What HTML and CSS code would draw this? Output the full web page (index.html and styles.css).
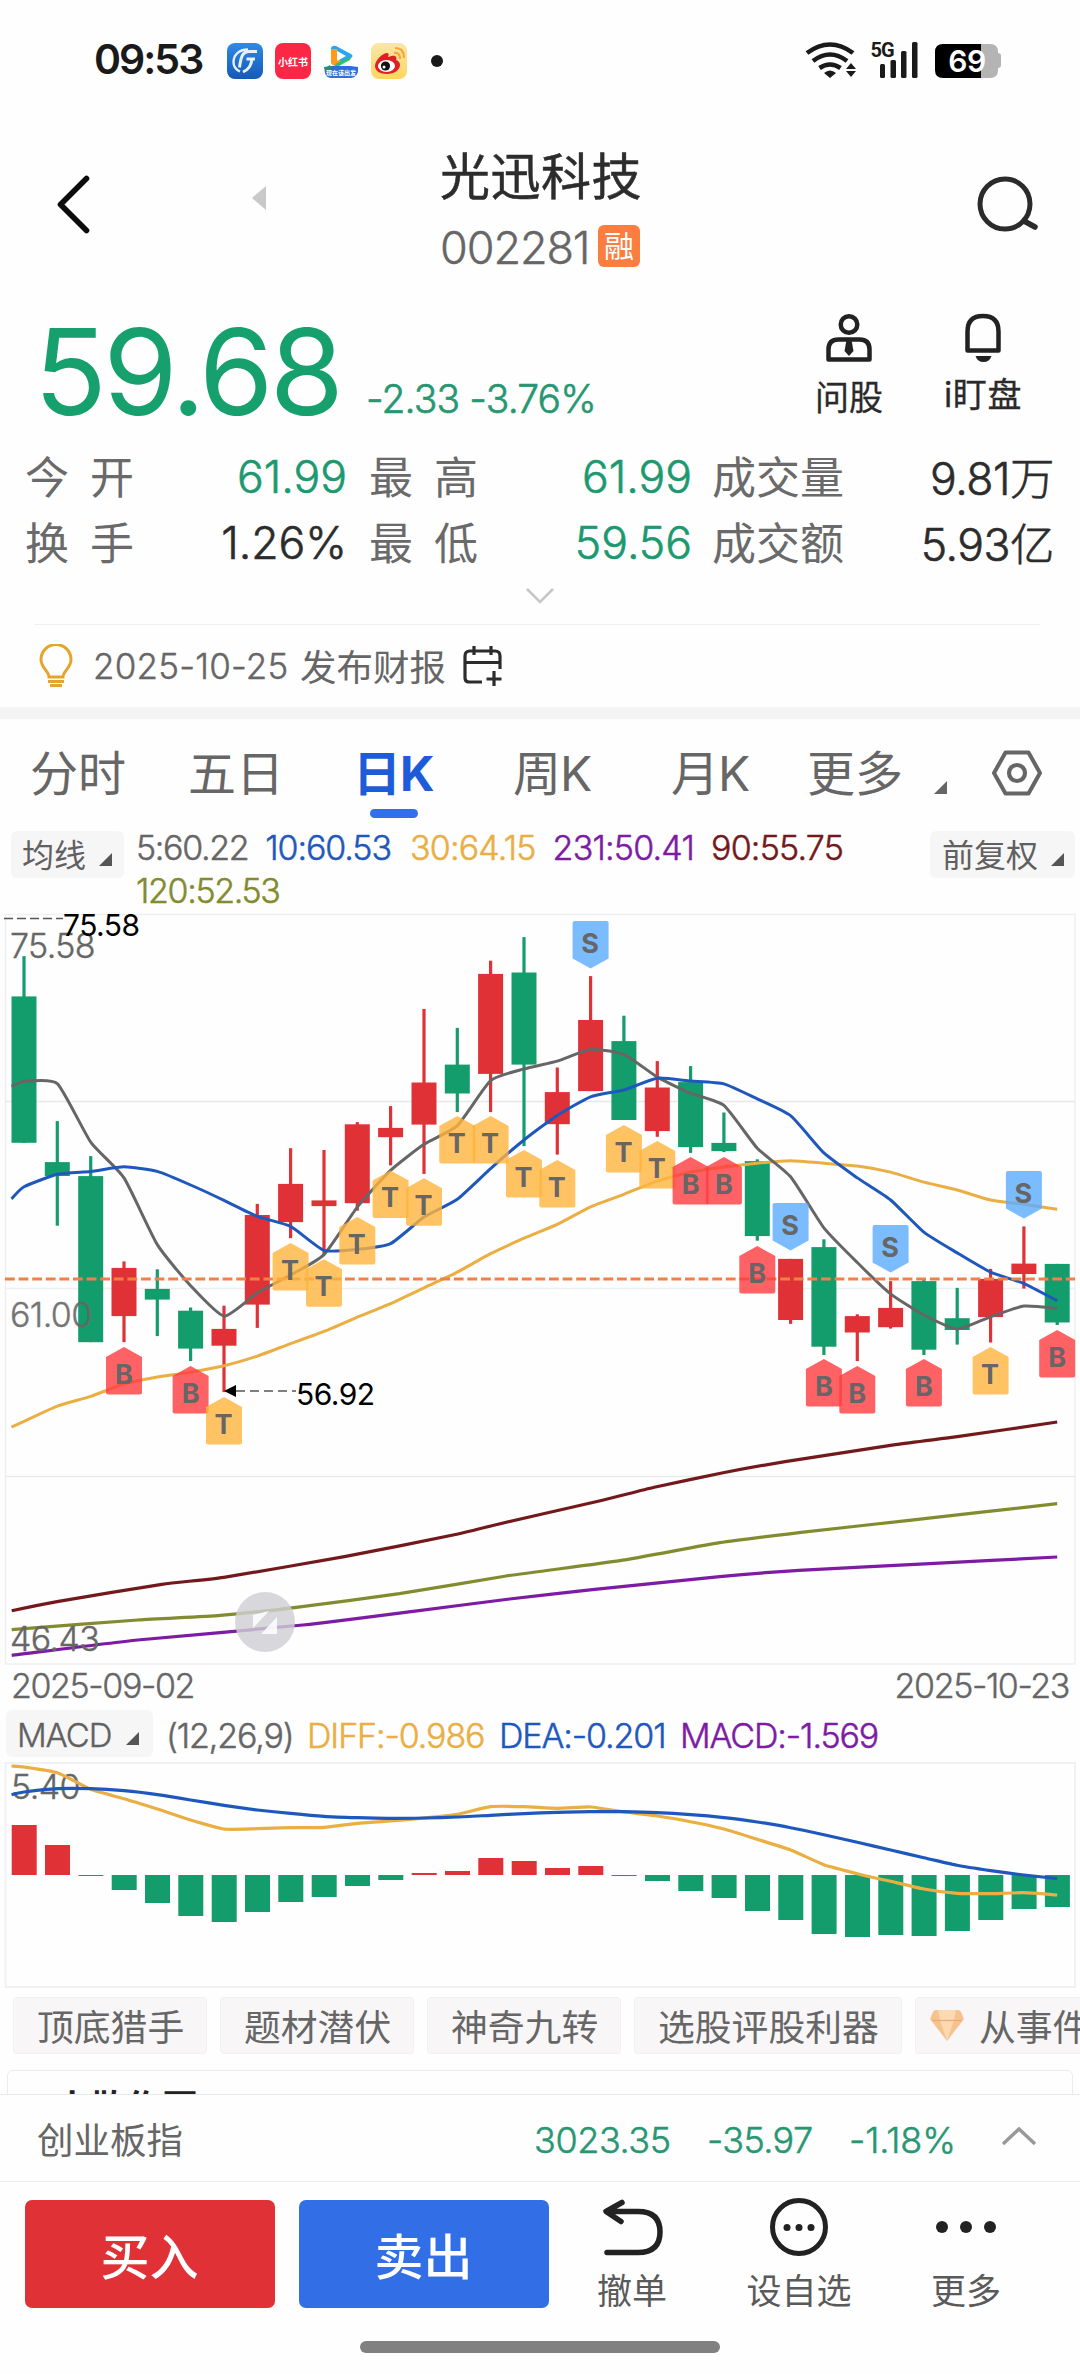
FILE: index.html
```html
<!DOCTYPE html>
<html lang="zh-CN">
<head>
<meta charset="utf-8">
<title>光迅科技 002281</title>
<link rel="stylesheet" href="styles.css">
</head>
<body>
<div class="status">
  <span class="clock">09:53</span>
  <div class="apps">
    <svg width="36" height="36" viewBox="0 0 36 36"><defs><linearGradient id="gb" x1="0" y1="0" x2="0" y2="1"><stop offset="0" stop-color="#2f8ae6"/><stop offset="1" stop-color="#1559b8"/></linearGradient></defs><rect width="36" height="36" rx="8" fill="url(#gb)"/><path d="M21 6.500C11 6.500 6.500 13 6.500 19c0 5 3 8 6.500 9.500" fill="none" stroke="#e6f0fc" stroke-width="2.400"/><path d="M30 8.500h-8c-6 0-8 4-9.500 16M28 16h-8.500M25 16c-1 7-3 10-9 13" fill="none" stroke="#e6f0fc" stroke-width="3"/></svg>
    <svg width="36" height="36" viewBox="0 0 36 36"><rect width="36" height="36" rx="8" fill="#fb2744"/><text x="18" y="22.500" class="app-xhs">小红书</text></svg>
    <svg width="36" height="36" viewBox="0 0 36 36"><path d="M8 5q1-3 5-2l15 8q3 2 0 4L14 23q-4 0-5-3z" fill="#2aa5f0"/><path d="M8 6v14q2 4 6 2l4-2-4-14z" fill="#ff9a1f"/><path d="M12 21l16-7q0 3-3 4l-9 5q-3 1-4-2z" fill="#2bc36b"/><path d="M14 8v10l9-5z" fill="#fff"/><path d="M1 24l8-1h18l8 1v5q-2 6-8 6H9q-6 0-7-5z" fill="#2c6fd6"/><path d="M2 25l5-3 1 3-5 4z" fill="#1f9c4a"/><text x="18" y="32" class="app-tv">现在该出发</text></svg>
    <svg width="36" height="36" viewBox="0 0 36 36"><defs><linearGradient id="wb" x1="0" y1="0" x2="0" y2="1"><stop offset="0" stop-color="#fbe6a6"/><stop offset="1" stop-color="#fdd65e"/></linearGradient></defs><rect width="36" height="36" rx="8" fill="url(#wb)"/><path d="M4 23c0-6 8-13 12-13 3 0 1 4 1 4s7-3 8 0c1 1 0 3 0 3s4 1 4 5c0 5-6 9-13 9S4 28 4 23z" fill="#df1f26"/><ellipse cx="15.500" cy="23" rx="8.500" ry="6" fill="#fff"/><circle cx="14.500" cy="23" r="4.600" fill="#111"/><circle cx="13" cy="24" r="1.500" fill="#fff"/><path d="M23 10q6-1 6 6M24 5q9 0 9 10" fill="none" stroke="#f0a93c" stroke-width="2.200"/></svg>
  </div>
  <span class="dot"></span>
  <svg class="radio" width="200" height="44" viewBox="804 38 200 44">
    <g fill="none" stroke="#1a1a1a" stroke-width="4.600"><path d="M807 53q23-17 46 0M813 61q17-13 34 0M819.500 68q10.500-7 21 0"/></g>
    <path d="M824 73q6-5 12 0l-6 5z" fill="#1a1a1a"/><path d="M846 69l5-6 5 6zM846 71h10l-5 6z" fill="#1a1a1a"/>
    <text x="870.500" y="56.500" class="net">5G</text>
    <g fill="#1a1a1a"><rect x="880" y="64" width="5" height="14" rx="1.500"/><rect x="890.500" y="60" width="5.500" height="18" rx="1.500"/><rect x="901" y="51" width="5.500" height="27" rx="1.500"/><rect x="912" y="42" width="5.500" height="36" rx="1.500"/></g>
    <path d="M981 44h9q8 0 8 8v1q3 0 3 3v9q0 3-3 3v2q0 8-8 8h-9z" fill="#b4b4b4"/><path d="M981 44h-38q-8 0-8 8v18q0 8 8 8h38z" fill="#000"/>
    <text x="967" y="72" class="batt">69</text>
  </svg>
</div>

<header class="head">
  <svg class="back" width="40" height="66" viewBox="52 172 40 66"><path d="M86.500 178.500L60.500 204.500 86.500 230.500" fill="none" stroke="#0c0c0c" stroke-width="5.600" stroke-linecap="round" stroke-linejoin="round"/></svg>
  <svg class="prev" width="14" height="24" viewBox="0 0 14 24"><path d="M14 0v24L0 12z" fill="#c9c9c9"/></svg>
  <div class="name">
    <h1>光迅科技</h1>
    <div class="code"><span>002281</span><i>融</i></div>
  </div>
  <svg class="find" width="66" height="60" viewBox="976 174 66 60"><circle cx="1005" cy="204" r="25" fill="none" stroke="#2b2b2b" stroke-width="5"/><path d="M1024 221l11 6" stroke="#2b2b2b" stroke-width="5.500" stroke-linecap="round"/></svg>
</header>

<section class="quote">
  <span class="price">59.68</span><span class="chg">-2.33 -3.76%</span>
  <div class="act ask"><svg width="48" height="52" viewBox="825 312 48 52"><g fill="none" stroke="#222" stroke-width="4.500"><circle cx="849" cy="324.500" r="8.300"/><path d="M828.500 359.500v-10q0-10 10-10h21q10 0 10 10v10z" stroke-linejoin="round"/></g><path d="M846.500 340h5l2 11-4.500 5-4.500-5z" fill="#222"/></svg><b>问股</b></div>
  <div class="act eye"><svg width="48" height="52" viewBox="959 312 48 52"><path d="M967.500 350.500v-19q0-15.500 15.500-15.500t15.500 15.500v19z" fill="none" stroke="#222" stroke-width="4.500" stroke-linejoin="round"/><path d="M975.500 356h16q-2 6-8 6t-8-6z" fill="#222"/></svg><b>i盯盘</b></div>
</section>

<section class="stats">
  <label class="sp">今开</label><span class="dn">61.99</span><label class="sp">最高</label><span class="dn">61.99</span><label>成交量</label><span>9.81万</span>
  <label class="sp">换手</label><span>1.26%</span><label class="sp">最低</label><span class="dn">59.56</span><label>成交额</label><span>5.93亿</span>
</section>
<div class="fold"><svg width="28" height="16" viewBox="0 0 28 16"><path d="M1 1l13 13L27 1" fill="none" stroke="#c6c6c6" stroke-width="2.500"/></svg></div>

<section class="notice">
  <svg width="36" height="44" viewBox="38 644 36 44"><path d="M49 677c0-6-8-9-8-17.500a15 15 0 0 1 30 0c0 8.500-8 11.500-8 17.500z" fill="none" stroke="#e3a52e" stroke-width="3"/><path d="M48 681.500h16M50 685.500h12" stroke="#e3a52e" stroke-width="3"/></svg>
  <span class="date">2025-10-25</span><span class="txt">发布财报</span>
  <svg width="40" height="42" viewBox="462 645 40 42"><path d="M482 682h-13q-4 0-4-4v-22q0-5 5-5h25q5 0 5 5v13M465 662.500h35M474 646v9M491 646v9M494 671v15M486.500 679h15" fill="none" stroke="#2c2c2c" stroke-width="3.200"/></svg>
</section>
<div class="band"></div>

<nav class="tabs">
  <a>分时</a><a>五日</a><a class="on">日K</a><a>周K</a><a>月K</a><a>更多</a>
  <svg class="corner" width="13" height="13" viewBox="0 0 13 13"><path d="M13 0v13H0z"/></svg>
  <svg class="hex" width="52" height="48" viewBox="0 0 52 48"><path d="M14.500 3.500h23L49 24 37.500 44.500h-23L3 24z" fill="none" stroke="#666" stroke-width="4" stroke-linejoin="round"/><circle cx="26" cy="24" r="8" fill="none" stroke="#666" stroke-width="4.200"/></svg>
</nav>

<section class="ma">
  <div class="chip">均线<svg width="13" height="13" viewBox="0 0 13 13"><path d="M13 0v13H0z"/></svg></div>
  <div class="vals"><span class="c5">5:60.22</span><span class="c10">10:60.53</span><span class="c30">30:64.15</span><span class="c231">231:50.41</span><span class="c90">90:55.75</span><span class="c120">120:52.53</span></div>
  <div class="chip adj">前复权<svg width="13" height="13" viewBox="0 0 13 13"><path d="M13 0v13H0z"/></svg></div>
</section>

<svg id="kline" class="kline" width="1080" height="756" viewBox="0 12 1080 756"></svg>
<div class="range"><span>2025-09-02</span><span>2025-10-23</span></div>

<section class="macd">
  <div class="chip">MACD<svg width="13" height="13" viewBox="0 0 13 13"><path d="M13 0v13H0z"/></svg></div>
  <span class="k">(12,26,9)</span><span class="c30">DIFF:-0.986</span><span class="c10">DEA:-0.201</span><span class="c231">MACD:-1.569</span>
</section>
<svg id="osc" class="osc" width="1080" height="230" viewBox="0 0 1080 230"></svg>

<div class="tools">
  <span>顶底猎手</span><span>题材潜伏</span><span>神奇九转</span><span>选股评股利器</span>
  <span class="gem"><svg width="34" height="31" viewBox="0 0 34 31"><path d="M6 0h22q2 0 3 2l3 7-17 22L0 9l3-7q1-2 3-2z" fill="#f6c38f"/><path d="M8 0h18l-2 10H10zM10 10h14l-7 21z" fill="#fbd9b1"/><path d="M2 10.500h30" stroke="#ecaa72" stroke-width="1.200"/></svg>从事件</span>
</div>
<div class="peek"><div class="card">小散作图</div></div>

<section class="index">
  <span class="nm">创业板指</span><span class="v1">3023.35</span><span class="v2">-35.97</span><span class="v3">-1.18%</span>
  <svg width="36" height="19" viewBox="0 0 36 19"><path d="M2 17L18 2l16 15" fill="none" stroke="#999" stroke-width="3.500"/></svg>
</section>

<footer class="bar">
  <button class="buy">买入</button><button class="sell">卖出</button>
  <div class="it i1"><svg width="64" height="58" viewBox="602 2198 64 58"><path d="M624 2202.500L608 2211.500 623 2221.500M610 2211.500h30q22 0 22 20.500t-22 20.500h-31" fill="none" stroke="#222" stroke-width="5.500" stroke-linecap="round" stroke-linejoin="round"/></svg><b>撤单</b></div>
  <div class="it i2"><svg width="64" height="58" viewBox="0 0 64 58"><circle cx="32" cy="29" r="26.500" fill="none" stroke="#222" stroke-width="5"/><g fill="#222"><circle cx="20" cy="29.500" r="3.500"/><circle cx="32" cy="29.500" r="3.500"/><circle cx="44" cy="29.500" r="3.500"/></g></svg><b>设自选</b></div>
  <div class="it i3"><svg width="64" height="58" viewBox="0 0 64 58"><g fill="#222"><circle cx="8" cy="29" r="6"/><circle cx="32" cy="29" r="6"/><circle cx="56" cy="29" r="6"/></g></svg><b>更多</b></div>
</footer>
<div class="home"></div>
<script src="chart.js"></script>
</body>
</html>
```
FILE: styles.css
```css
* { box-sizing: border-box; }
body { margin: 0; width: 1080px; height: 2374px; overflow: hidden; background: #fefefe; color: #666; font-family: Inter, "Noto Sans CJK SC", sans-serif; }
svg { display: block; flex: none; }
span, b, i, a, label { white-space: nowrap; font-weight: 400; font-style: normal; }

.status { height: 120px; display: flex; align-items: flex-start; }
.clock { margin: 34px 0 0 94px; width: 133px; font-weight: 600; font-size: 41px; line-height: 50px; letter-spacing: -2px; color: #1a1a1a; }
.apps { display: flex; gap: 12px; margin-top: 43px; }
.app-xhs { font: 700 10px "Noto Sans CJK SC", sans-serif; fill: #fff; text-anchor: middle; }
.app-tv { font: 700 6px "Noto Sans CJK SC", sans-serif; fill: #fff; text-anchor: middle; }
.dot { width: 12px; height: 12px; border-radius: 50%; background: #1a1a1a; margin: 55px 0 0 24px; }
.radio { margin: 38px 0 0 361px; }
.net { font: 700 20px Roboto, sans-serif; fill: #1a1a1a; letter-spacing: -1px; }
.batt { font: 600 30px Inter, sans-serif; fill: #fff; text-anchor: middle; letter-spacing: -0.5px; }

.head { height: 170px; display: flex; align-items: flex-start; }
.back { margin: 52px 0 0 52px; }
.prev { margin: 66px 0 0 160px; }
.name { margin: 24px 0 0 174px; width: 222px; }
.name h1 { margin: 0; font-weight: 400; font-size: 50px; line-height: 66px; color: #2c2c2c; letter-spacing: .5px; -webkit-text-stroke: .5px #2c2c2c; }
.code { display: flex; align-items: center; height: 42px; margin-top: 15px; }
.code span { font-size: 45px; font-weight: 300; letter-spacing: -1.1px; line-height: 46px; width: 156px; margin-right: 2px; padding-top: 4px; -webkit-text-stroke: .4px #666; }
.code i { width: 42px; height: 42px; border-radius: 6px; background: #fb7d3f; color: #fff; font-size: 30px; line-height: 42px; text-align: center; }
.find { margin: 54px 0 0 314px; }

.quote { height: 150px; display: flex; align-items: flex-start; color: #15a06e; }
.price { margin: 12px 0 0 34px; width: 332px; font-size: 120px; line-height: 140px; letter-spacing: -3.6px; font-weight: 400; }
.chg { margin-top: 84px; width: 438px; font-size: 39px; line-height: 50px; font-weight: 300; letter-spacing: -.85px; color: #269772; -webkit-text-stroke: .6px #269772; }
.act { margin-top: 22px; display: flex; flex-direction: column; align-items: center; color: #2a2a2a; }
.act b { font-size: 34px; line-height: 50px; margin-top: 9px; -webkit-text-stroke: .3px #2a2a2a; }
.ask { width: 90px; }
.eye { width: 90px; margin-left: 44px; }
.eye b { margin-top: 6px; letter-spacing: .6px; }

.stats { height: 132px; padding: 0 26px 0 25px; margin-top: 3px; display: grid; grid-template-columns: 110px 212px 130px 215px 133px 1fr; grid-template-rows: 66px 66px; align-items: center; font-size: 44.500px; }
.stats label { margin-top: -3px; color: #6a6a6a; font-size: 44px; }
.stats label:nth-child(6n+3) { padding-left: 22px; }
.stats label:nth-child(6n+5) { padding-left: 20px; }
.stats label.sp { letter-spacing: 21px; }
.stats span { text-align: right; letter-spacing: 0; padding-top: 1px; color: #2c2c2c; font-weight: 300; -webkit-text-stroke: .6px currentColor; }
.stats span:nth-child(6n) { padding-top: 0; margin-top: -2px; letter-spacing: -.5px; }
.stats span.dn { color: #1b9970; }
.fold { height: 49px; padding: 13px 526px 0; }

.notice { height: 83px; margin: 0; display: flex; padding-left: 38px; align-items: center; position: relative; }
.notice::before { content: ""; position: absolute; left: 34px; right: 40px; top: 0; height: 1px; background: #f0f0f0; }
.date { margin-left: 19px; width: 207px; font-size: 35px; letter-spacing: .2px; font-weight: 300; -webkit-text-stroke: .4px #666; }
.txt { font-size: 36.500px; width: 162px; }
.band { height: 12px; background: #f4f4f4; }

.tabs { height: 107px; padding-left: 30px; display: flex; font-size: 48px; }
.tabs a { line-height: 109px; width: 158px; color: #666; }
.tabs a:nth-child(2) { width: 165px; }
.tabs a:nth-child(3) { width: 160px; }
.tabs a:nth-child(5) { width: 136px; }
.tabs a:nth-child(6) { width: 127px; }
.tabs a:nth-child(4), .tabs a:nth-child(5) { letter-spacing: -1px; }
.tabs .on { color: #1d5bd8; font-weight: 700; position: relative; letter-spacing: -1px; }
.tabs .on::after { content: ""; position: absolute; left: 17px; top: 90px; width: 48px; height: 9px; border-radius: 5px; background: #326fe8; }
.corner { margin-top: 62px; fill: #666; }
.hex { margin: 30px 0 0 44px; }

.ma { height: 86px; display: flex; padding: 5px 5px 0 11px; }
.chip { height: 47px; padding-left: 11px; border-radius: 6px; background: #f7f6f7; font-size: 32px; line-height: 49px; display: flex; width: 113px; fill: #555; color: #606060; flex: none; }
.chip svg { margin: 22px 0 0 13px; }
.vals { width: 806px; flex: none; padding: 0 40px 0 12px; margin-top: -5px; display: flex; flex-wrap: wrap; align-content: flex-start; column-gap: 17px; font-size: 34px; line-height: 43px; letter-spacing: -1.35px; font-weight: 300; }
.vals span, .macd span { font-weight: 300; -webkit-text-stroke: .5px currentColor; }
.vals .c10 { letter-spacing: -1.1px; }
.vals .c30, .vals .c231, .vals .c90 { letter-spacing: -.8px; }
.vals .c30 { margin-left: 2px; }
.adj { width: 145px; padding-left: 12px; }
.c5 { color: #666; }
.c10 { color: #1e58bd; }
.c30 { color: #eaae42; }
.c231 { color: #7d1ba3; }
.c90 { color: #73191c; }
.c120 { color: #838b2f; }

.txt-axis { font: 300 34px Inter, sans-serif; fill: #666; stroke: #666; stroke-width: .4px; letter-spacing: -.6px; }
.txt-peak { font: 400 30px Inter, sans-serif; fill: #000; letter-spacing: -.5px; }
.mark { font: 700 27px Inter, sans-serif; fill: #666; text-anchor: middle; }

.range { height: 38px; padding: 0 11px; display: flex; justify-content: space-between; font-size: 34px; line-height: 36px; letter-spacing: -1.4px; }
.range span { font-weight: 300; -webkit-text-stroke: .4px #666; }
.macd { height: 54px; display: flex; padding: 4px 0 0 6px; font-size: 34px; line-height: 51px; letter-spacing: -1.1px; }
.macd .chip { width: 147px; padding-left: 11px; font-size: 33px; line-height: 51px; font-weight: 300; -webkit-text-stroke: .4px #666; }
.macd .chip svg { margin-left: 15px; }
.macd .k { margin-left: 13px; width: 141px; }
.macd .c30 { width: 192px; }
.macd .c10 { width: 181px; }

.tools { height: 80px; padding: 7px 0 0 13px; display: flex; gap: 13px; overflow: hidden; }
.tools span { height: 57px; width: 194px; flex: none; background: #f8f6f7; border: 1px solid #f2f0f1; border-radius: 4px; padding-left: 23px; font-size: 36.800px; line-height: 59px; color: #666; }
.tools span:nth-child(4) { width: 268px; }
.tools .gem { display: flex; padding-left: 14px; width: 200px; }
.gem svg { margin: 12px 15px 0 0; }
.peek { height: 24px; overflow: hidden; padding: 0 7px; }
.card { border: 1px solid #ececec; border-radius: 6px; height: 80px; padding: 11px 0 0 46px; font-size: 36px; font-weight: 700; line-height: 52px; color: #222; }

.index { height: 87px; border-top: 1px solid #e8e8e8; display: flex; align-items: center; padding: 4px 0 0 37px; font-size: 36px; color: #269772; letter-spacing: -.9px; }
.index .nm { width: 497px; font-size: 36.500px; color: #666; letter-spacing: 0; margin-top: -3px; font-weight: 400; -webkit-text-stroke: 0; }
.index .v1 { width: 173px; letter-spacing: -.4px; }
.index .v2 { width: 142px; letter-spacing: -.6px; }
.index .v3 { width: 152px; letter-spacing: -.1px; }
.index span { font-weight: 300; -webkit-text-stroke: .5px currentColor; }
.index svg { margin-top: -8px; }

.bar { height: 160px; border-top: 1px solid #ececec; padding: 18px 0 0 25px; display: flex; }
.bar button { width: 250px; height: 108px; border: 0; border-radius: 7px; background: #e03137; color: #fff; font: 500 49px "Noto Sans CJK SC", sans-serif; padding: 0 1px 2px 0; }
.bar .sell { margin-left: 24px; background: #326ee6; }
.it { display: flex; flex-direction: column; align-items: center; width: 120px; margin-top: -2px; }
.it b { font-size: 35px; line-height: 46px; margin-top: 12px; color: #5a5a5a; }
.i1 { margin-left: 23px; }
.i2 { margin-left: 47px; }
.i3 { margin-left: 47px; }
.home { width: 360px; height: 12px; border-radius: 6px; background: #808080; margin: 0 auto; }
```
FILE: chart.js
```js
const RED = '#e03137', GREEN = '#149d6c';
const STEP = 33.33, FIRST = 24;
const cx = i => FIRST + STEP * i;
const f = n => n.toFixed(1);

// Price pane. Values are measured downward from the pane top, 2.8 per pixel.
const py = v => v / 2.8;
// [direction, high, body top, body bottom, low]
const candles = [
  ['G',157,270,680,680],['G',619,734,773,912],['G',717,773,1238,1238],['R',1012,1030,1165,1238],
  ['G',1034,1089,1119,1221],['G',1141,1150,1256,1291],['R',1136,1201,1248,1378],['R',851,882,1133,1198],
  ['R',695,795,902,947],['R',700,841,857,992],['R',622,628,849,870],['R',577,638,664,743],
  ['R',305,511,629,767],['G',358,461,542,594],['R',170,207,487,594],['G',104,203,461,689],
  ['R',469,538,628,713],['R',213,336,535,535],['G',324,395,616,616],['R',451,525,647,663],
  ['G',465,510,692,708],['G',595,680,703,706],['G',726,731,941,954],['R',1005,1005,1176,1187],
  ['G',950,972,1251,1274],['R',1160,1165,1211,1291],['R',1067,1142,1196,1200],['G',1059,1067,1259,1274],
  ['G',1086,1171,1204,1245],['R',1033,1061,1168,1239],['R',914,1018,1047,1088],['G',1019,1019,1183,1190]
];
const ma5 = [522,508,514,678,778,965,1080,1165,1100,1050,993,860,757,684,632,506,473,451,419,432,496,541,575,695,775,918,1015,1103,1162,1201,1167,1137,1144];
const ma10 = [837,803,768,760,747,760,798,841,886,914,981,978,962,888,838,752,672,603,551,532,499,507,515,557,604,708,778,840,930,988,1042,1074,1122];
const ma30 = [1476,1460,1417,1390,1355,1336,1322,1304,1277,1242,1208,1168,1130,1086,1042,990,947,908,859,824,787,762,748,737,730,737,745,762,790,812,840,852,866];
const slow = {
  '#73191c': [[17,632],[85,604],[235,553],[325,532],[500,470],[665,402],[720,374],[870,303],[950,262],[1050,218],[1140,185],[1300,134],[1390,110],[1535,66]],
  '#838b2f': [[17,689],[200,660],[320,646],[430,622],[580,581],[735,528],[900,482],[1045,428],[1160,398],[1320,361],[1535,311]],
  '#7d1ba3': [[17,766],[200,720],[440,675],[600,634],[740,597],[860,569],[1045,530],[1160,511],[1350,491],[1535,471]]
};
const marks = [
  [3,'B',1252],[5,'B',1305],[6,'T',1392],[8,'T',960],[9,'T',1006],[10,'T',888],[11,'T',757],[12,'T',779],
  [13,'T',605],[14,'T',605],[15,'T',700],[16,'T',728],[18,'T',630],[19,'T',675],[20,'B',720],[21,'B',720],
  [22,'B',969],[24,'B',1285],[25,'B',1305],[27,'B',1285],[29,'T',1252],[31,'B',1204],
  [17,'S',59],[23,'S',848],[26,'S',910],[30,'S',759]
];
const markFill = { B: '#ff3b3f', T: '#ffb43c', S: '#5aabff' };

// Smooth curve through the points, with a small tension.
function curve(pts, color, w) {
  let d = `M${f(pts[0][0])} ${f(pts[0][1])}`;
  const t = 0.09;
  for (let i = 0; i < pts.length - 1; i++) {
    const a = pts[i - 1] || pts[i], b = pts[i], c = pts[i + 1], e = pts[i + 2] || c;
    d += `C${f(b[0] + (c[0] - a[0]) * t)} ${f(b[1] + (c[1] - a[1]) * t)} ${f(c[0] - (e[0] - b[0]) * t)} ${f(c[1] - (e[1] - b[1]) * t)} ${f(c[0])} ${f(c[1])}`;
  }
  return `<path d="${d}" fill="none" stroke="${color}" stroke-width="${w}"/>`;
}
const daily = (vals, y) => vals.map((v, k) => [k ? cx(k - 1) : 11.5, y(v)]);
const hline = (y, c) => `<path d="M6 ${y}H1075" stroke="${c}" stroke-width="1.5"/>`;

let k = '<rect x="5.500" y="14.500" width="1069.500" height="749.500" fill="none" stroke="#efeff1" stroke-width="1.500"/>';
k += hline(201.5, '#e8e8e8') + hline(388.5, '#efefef') + hline(576.5, '#e8eae8');
k += '<text class="txt-axis" x="10" y="57.500">75.58</text>';
candles.forEach(([dir, hi, top, bot, lo], i) => {
  const c = dir === 'R' ? RED : GREEN;
  k += `<path d="M${f(cx(i))} ${f(py(hi))}V${f(py(lo))}" stroke="${c}" stroke-width="3.2"/>`;
  k += `<rect x="${f(cx(i) - 12.5)}" y="${f(py(top))}" width="25" height="${f(py(bot - top))}" fill="${c}"/>`;
});
k += '<text class="txt-axis" x="10" y="427" opacity=".9">61.00</text>';
k += curve(daily(ma30, py), '#eaae42', 3) + curve(daily(ma5, py), '#666', 3) + curve(daily(ma10, py), '#1e58bd', 3);
for (const c in slow) k += curve(slow[c].map(([x, y]) => [x / 1.452, 500 + y / 3]), c, 3.2);
k += '<path d="M5 379H1075" stroke="#ef8145" stroke-width="2.800" stroke-dasharray="9.800 3.800"/>';
marks.forEach(([i, ch, v]) => {
  const x = cx(i), y = py(v), s = ch === 'S';
  const d = s
    ? `M${f(x - 16)} ${f(y)}h32q2 0 2 2v35.500l-18 10l-18-10V${f(y + 2)}q0-2 2-2z`
    : `M${f(x)} ${f(y)}l18 10v35.500q0 2-2 2h-32q-2 0-2-2v-35.500z`;
  k += `<path d="${d}" fill="${markFill[ch]}" fill-opacity=".8"/><text class="mark" x="${f(x - (ch === 'B' ? 0 : .5))}" y="${f(y + (s ? 32 : 37))}">${ch}</text>`;
});
k += '<path d="M4 18.500H63" stroke="#555" stroke-width="1.500" stroke-dasharray="9 4"/><text class="txt-peak" x="63" y="36">75.58</text>';
k += '<path d="M236 491H296" stroke="#555" stroke-width="1.500" stroke-dasharray="9 5"/><path d="M224 491l12-6v12z"/><text class="txt-peak" x="296" y="504.500">56.92</text>';
k += '<text class="txt-axis" x="10" y="750.500">46.43</text>';
k += '<circle cx="265" cy="722" r="30" fill="#cfced3" fill-opacity=".82"/><path d="M253 715v13l16-17zM277 717v17h-16z" fill="#fff" fill-opacity=".85"/>';
document.getElementById('kline').innerHTML = k;

// Oscillator pane: three units per pixel, zero line at 465.
const ZERO = 465;
const hist = [315,375,467,510,549,588,606,576,546,531,498,480,459,453,414,423,444,438,467,483,513,534,573,600,642,651,645,648,633,600,567,561];
const diff = [138,141,158,208,236,267,300,327,326,323,322,310,303,294,283,260,260,265,261,276,288,305,327,358,390,434,461,484,507,520,521,518,525];
const dea = [224,216,206,206,212,224,240,256,270,280,289,293,295,294,291,286,281,277,275,275,278,284,293,306,323,344,367,390,413,436,452,465,476];
const oy = v => v / 3 - 40;
let m = '<rect x="5.500" y="3" width="1069.500" height="224" fill="none" stroke="#f2f1f2" stroke-width="2"/><text class="txt-axis" x="11" y="38.500">5.40</text>';
hist.forEach((v, i) => {
  const a = Math.min(v, ZERO), b = Math.max(v, ZERO);
  m += `<rect x="${f(cx(i) - 12.3)}" y="${f(oy(a))}" width="25" height="${f(Math.max(1, (b - a) / 3))}" fill="${v < ZERO ? RED : GREEN}"/>`;
});
m += curve(daily(diff, oy), '#eaae42', 3.2) + curve(daily(dea, oy), '#1e58bd', 3.2);
document.getElementById('osc').innerHTML = m;
```
